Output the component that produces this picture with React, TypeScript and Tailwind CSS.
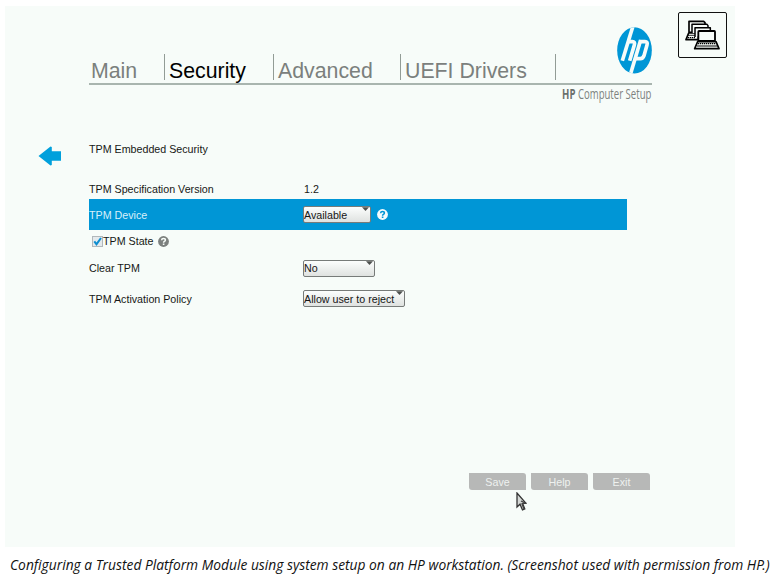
import { ReactNode } from "react";

function HpLogo() {
  return (
    <svg className="h-[47px] w-[35px]" viewBox="51 35 105 141">
      <defs>
        <clipPath id="disc">
          <ellipse cx="103.5" cy="105" rx="52" ry="69.5" />
        </clipPath>
      </defs>
      <ellipse cx="103.5" cy="105" rx="52" ry="69.5" fill="#0096d6" />
      <g clipPath="url(#disc)" fill="none" stroke="#f7fcf9" strokeWidth="11">
        <path d="M99 32 L67 136" />
        <path d="M83 79 H97 Q106 79 103 89 L89 136" />
        <path d="M122 74 L91 178" />
        <path d="M119 79 H135 Q144 79 141 89 L132 121 Q129 130 121 130 H104" />
      </g>
    </svg>
  );
}

function LaptopsIcon() {
  return (
    <svg className="h-[30px] w-[35px]" viewBox="46 43 105 90" fill="#f7fcf9" stroke="#000" strokeWidth="5" strokeLinejoin="round">
      <path d="M58 47 H102 L106 51 V80 H58 Z" />
      <path d="M57 82 L49 102 H86 V82 Z" />
      <path d="M56 89 H78 M54 96 H78" strokeWidth="4" strokeDasharray="4 2" />
      <path d="M67 82 V56 H112 L115 60 V84" strokeWidth="4.5" />
      <path d="M76 94 V66 H122 V82" strokeWidth="4.5" />
      <rect x="86" y="76" width="50" height="30" rx="2" strokeWidth="5.5" />
      <path d="M84 108 H139 L148 129 H75 Z" />
      <path d="M85 114 H139 M83 121 H142" strokeWidth="4" strokeDasharray="4 2" />
    </svg>
  );
}

function HelpDot({ dot, mark }: { dot: string; mark: string }) {
  return (
    <svg className="size-[11px] shrink-0" viewBox="0 0 11 11">
      <circle cx="5.5" cy="5.5" r="5.4" fill={dot} />
      <path d="M3.6 4.2 Q3.7 2.6 5.5 2.6 Q7.4 2.6 7.4 4.1 Q7.4 4.9 6.4 5.4 Q5.6 5.9 5.6 6.7" fill="none" stroke={mark} strokeWidth="1.5" />
      <rect x="4.8" y="7.5" width="1.6" height="1.5" fill={mark} />
    </svg>
  );
}

function Select({ width, children }: { width: string; children: ReactNode }) {
  return (
    <div className={`${width} relative flex h-[17px] items-center rounded-[2px] border border-[#777b79] bg-linear-to-b from-[#fcfefd] to-[#dfe2e0] text-[#151515]`}>
      <span className="whitespace-nowrap">{children}</span>
      <svg className="absolute top-0 right-[1px] h-[4px] w-[7px]" viewBox="0 0 7 4">
        <path d="M0 0.3 H7 L3.5 4 Z" fill="#4c4f4d" />
      </svg>
    </div>
  );
}

function Tab({ width, active, first, children }: { width: string; active?: boolean; first?: boolean; children?: ReactNode }) {
  return (
    <div className={`${width} flex h-[26px] shrink-0 items-center pt-[8px] ${first ? "pl-[2px]" : "border-l border-[#929c96] pl-[4px]"} ${active ? "text-black" : "text-[#7b807d]"}`}>
      <span className="whitespace-nowrap">{children}</span>
    </div>
  );
}

function Row({ className, label, children }: { className: string; label: string; children?: ReactNode }) {
  return (
    <div className={`flex w-[538px] items-center ${className}`}>
      <span className="w-[214px] shrink-0">{label}</span>
      {children}
    </div>
  );
}

function Button({ children }: { children: ReactNode }) {
  return (
    <div className="flex h-[17px] w-[57px] items-center justify-center rounded-tr-[3px] rounded-bl-[3px] bg-[#b7b8b7] pt-px text-[#eef1ef]">
      {children}
    </div>
  );
}

export default function App() {
  return (
    <div className="h-[579px] w-[778px] overflow-hidden bg-white pt-[6px] pl-[5px]">
      <main className="relative h-[541px] w-[730px] bg-[#f7fcf9] font-['Liberation_Sans',sans-serif] text-[10.7px] leading-[14px] text-[#161816]">
        <header className="flex h-[97px] pl-[84px]">
          <div className="w-[563px] shrink-0">
            <nav className="flex h-[79px] items-end justify-between border-b-2 border-[#a9b5af]">
              <div className="flex pb-[3px] text-[21.3px] leading-[24px]">
                <Tab width="w-[75px]" first>Main</Tab>
                <Tab width="w-[109px]" active>Security</Tab>
                <Tab width="w-[127px]">Advanced</Tab>
                <Tab width="w-[155px]">UEFI Drivers</Tab>
                <Tab width="w-[2px]" />
              </div>
              <div className="mb-[9px]">
                <HpLogo />
              </div>
            </nav>
            <div className="flex justify-end pr-px">
              <span className="origin-right scale-x-[0.685] font-['Open_Sans',sans-serif] text-[14px] leading-[18px] whitespace-nowrap text-[#7d827f]">
                <b className="text-[#6a6f6c]">HP</b> Computer Setup
              </span>
            </div>
          </div>
          <div className="mt-[6px] ml-[26px] flex h-[46px] w-[49px] items-center justify-center rounded-[2px] border-[1.5px] border-[#111]">
            <LaptopsIcon />
          </div>
        </header>

        <section className="flex pt-[36px]">
          <div className="w-[84px] shrink-0 pt-[7px] pl-[33px]">
            <svg className="h-[20px] w-[24px]" viewBox="0 0 24 20">
              <path d="M0.5 10 L12.5 0.5 L13.8 1 V5.3 H23 V14.7 H13.8 V19 L12.5 19.5 Z" fill="#00a0dc" />
            </svg>
          </div>
          <div>
            <Row className="h-[20px]" label="TPM Embedded Security" />
            <Row className="mt-[20px] h-[20px]" label="TPM Specification Version">
              <span className="pl-px">1.2</span>
            </Row>
            <Row className="h-[31px] bg-[#0096d6] text-[#d8f0fa]" label="TPM Device">
              <Select width="w-[68px]">Available</Select>
              <span className="ml-[6px]"><HelpDot dot="#f4fbfd" mark="#0096d6" /></span>
            </Row>
            <div className="mb-px flex h-[22px] items-center pl-[3px]">
              <svg className="size-[11px]" viewBox="0 0 11 11">
                <rect x="0.5" y="0.5" width="10" height="10" fill="#e4eaed" stroke="#b2b8bb" />
                <path d="M2.3 5.3 L4.5 8.2 L9 2" fill="none" stroke="#0e8ed0" strokeWidth="2" />
              </svg>
              <span className="mr-[5px]">TPM State</span>
              <HelpDot dot="#7c807e" mark="#f7fcf9" />
            </div>
            <Row className="h-[30px]" label="Clear TPM">
              <Select width="w-[72px]">No</Select>
            </Row>
            <Row className="h-[31px]" label="TPM Activation Policy">
              <Select width="w-[102px]">Allow user to reject</Select>
            </Row>
          </div>
        </section>

        <footer className="mt-[159px] flex gap-[5px] pl-[464px]">
          <Button>Save</Button>
          <Button>Help</Button>
          <Button>Exit</Button>
        </footer>

        <svg className="absolute top-[486px] left-[511px] h-[20px] w-[11px]" viewBox="0 0 11 20">
          <path d="M1 1 V15 L4 12.2 L6.5 18 L8.8 17 L6.6 11.5 L9.8 11.2 Z" fill="#d5d8d6" stroke="#333" strokeWidth="1.3" />
          <path d="M5 9 L9 11 L6 12 L8 17" fill="none" stroke="#444" strokeWidth="1.3" />
        </svg>
      </main>
      <p className="pt-[8px] pl-[5px] font-['Open_Sans',sans-serif] text-[13.8px] leading-[20px] whitespace-nowrap text-[#111] italic">
        Configuring a Trusted Platform Module using system setup on an HP workstation. (Screenshot used with permission from H<span className="tracking-[-1.8px]">P</span>.)
      </p>
    </div>
  );
}
